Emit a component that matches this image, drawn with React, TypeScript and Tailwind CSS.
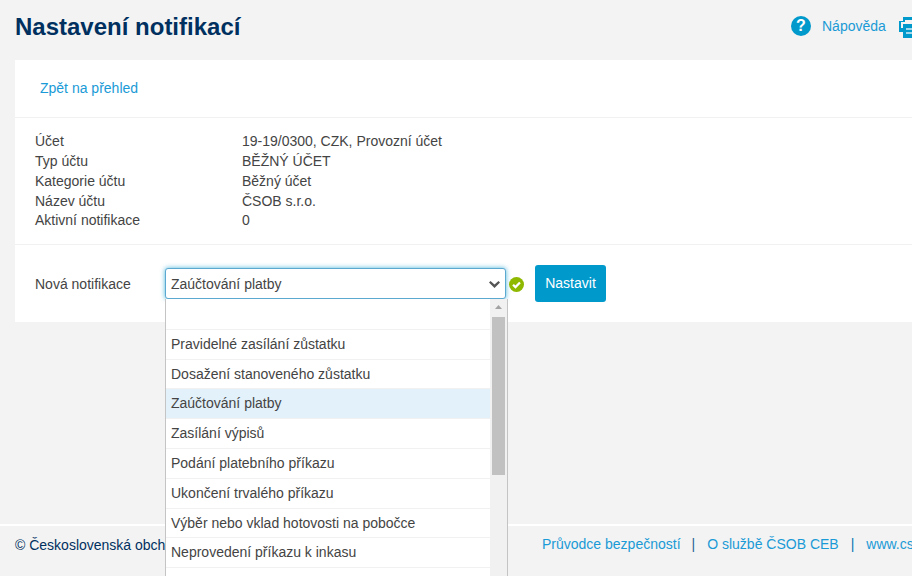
const info = [
  ['Účet', '19-19/0300, CZK, Provozní účet'],
  ['Typ účtu', 'BĚŽNÝ ÚČET'],
  ['Kategorie účtu', 'Běžný účet'],
  ['Název účtu', 'ČSOB s.r.o.'],
  ['Aktivní notifikace', '0'],
];

const options = [
  { label: '', height: 'h-[31px]' },
  { label: 'Pravidelné zasílání zůstatku', height: 'h-[30px]' },
  { label: 'Dosažení stanoveného zůstatku', height: 'h-[29px]' },
  { label: 'Zaúčtování platby', height: 'h-[30px]' },
  { label: 'Zasílání výpisů', height: 'h-[30px]' },
  { label: 'Podání platebního příkazu', height: 'h-[30px]' },
  { label: 'Ukončení trvalého příkazu', height: 'h-[30px]' },
  { label: 'Výběr nebo vklad hotovosti na pobočce', height: 'h-[29px]' },
  { label: 'Neprovedení příkazu k inkasu', height: 'h-[30px]' },
  { label: '', height: 'h-[30px]' },
];

function PrintIcon() {
  return (
    <svg width="24" height="21" viewBox="0 0 24 21" className="block shrink-0">
      <path d="M4 0h16v8h-2V3H6v2H2v6h2v4H0V4h4z" fill="#0099cc" />
      <path d="M4 7h17v14H4z" fill="#0099cc" />
      <path d="M7 11h14v2H7zM7 15h14v2H7z" fill="#9fd8ec" />
    </svg>
  );
}

export default function App() {
  return (
    <div className="relative w-[912px] h-[576px] overflow-hidden bg-[#f3f3f3] text-[14px] text-[#444] font-['Liberation_Sans',Arial,sans-serif]">
      <header className="flex items-center justify-between h-[60px] pl-[15px] pb-[6px]">
        <h1 className="text-[24px] font-bold text-[#00305f] leading-none whitespace-nowrap">Nastavení notifikací</h1>
        <div className="flex items-center w-[121px] mb-[2px] shrink-0 overflow-hidden">
          <span className="flex items-center justify-center w-[20px] h-[20px] rounded-full bg-[#0099cc] text-white text-[16px] font-bold shrink-0">?</span>
          <span className="ml-[11px] text-[#1a9ad6] whitespace-nowrap">Nápověda</span>
          <span className="ml-[13px] mt-[2px]"><PrintIcon /></span>
        </div>
      </header>

      <main className="ml-[15px] bg-white h-[262px] w-[920px]">
        <div className="h-[58px] flex items-center pl-[25px] border-b border-[#f1f1f1]">
          <a className="text-[#1a9ad6]">Zpět na přehled</a>
        </div>
        <div className="h-[127px] pt-[14.2px] pl-[20px] border-b border-[#f1f1f1]">
          {info.map(([label, value]) => (
            <div key={label} className="flex h-[19.8px] leading-[19.8px]">
              <div className="w-[207px] shrink-0">{label}</div>
              <div>{value}</div>
            </div>
          ))}
        </div>
        <div className="flex items-center pl-[20px] h-[77px]">
          <div className="w-[130px] shrink-0 pt-[1px]">Nová notifikace</div>
          <div className="flex items-center justify-between w-[341px] h-[31px] pl-[5px] pr-[5px] pt-[1px] rounded-[3px] border border-[#5ba8d0] shadow-[0_0_5px_rgba(0,153,204,0.7)] bg-white">
            <span>Zaúčtování platby</span>
            <svg width="11" height="7" viewBox="0 0 11 7" className="shrink-0">
              <path d="M0 1.5L1.5 0l4 3.5 4-3.5L11 1.5 5.5 7z" fill="#555" />
            </svg>
          </div>
          <svg width="15" height="15" viewBox="0 0 16 16" className="ml-[3px] mt-[1px] shrink-0">
            <circle cx="8" cy="8" r="8" fill="#8fb800" />
            <path d="M4.3 8.2l2.6 2.6 4.8-5" fill="none" stroke="#fff" strokeWidth="2.4" />
          </svg>
          <button className="ml-[11px] w-[71px] h-[37px] rounded-[3px] bg-[#0099cc] text-white text-[14px] font-normal">Nastavit</button>
        </div>
      </main>

      <footer className="absolute left-0 top-[524px] w-full h-[52px] border-t-2 border-white flex items-center pb-[12px]">
        <span className="ml-[15px] text-[#00305f] whitespace-nowrap">© Československá obchodní banka, a. s.</span>
        <div className="absolute left-[542px] top-[8px] flex whitespace-nowrap text-[#1a9ad6] leading-[20px]">
          <span>Průvodce bezpečností</span>
          <span className="ml-[11px] mr-[12px] text-[#2d5f96]">|</span>
          <span>O službě ČSOB CEB</span>
          <span className="mx-[12px] text-[#0077b3]">|</span>
          <span>www.csob.cz</span>
        </div>
      </footer>

      <div className="absolute left-[165px] top-[299px] w-[343px] h-[290px] flex bg-white border-x border-[#c4c4c4]">
        <ul className="flex-1 min-w-0">
          {options.map((o, i) => (
            <li
              key={i}
              className={`${o.height} leading-[29px] pl-[5px] border-b border-[#f1f1f1] whitespace-nowrap ${o.label === 'Zaúčtování platby' ? 'bg-[#e3f1fa]' : ''}`}
            >
              {o.label}
            </li>
          ))}
        </ul>
        <div className="w-[17px] shrink-0 bg-[#f1f1f1] flex flex-col items-center">
          <svg width="9" height="18" viewBox="0 0 9 18" className="shrink-0">
            <path d="M4.5 6l3.5 4H1z" fill="#a3a3a3" />
          </svg>
          <div className="w-[13px] h-[158px] bg-[#c1c1c1]" />
        </div>
      </div>
    </div>
  );
}
